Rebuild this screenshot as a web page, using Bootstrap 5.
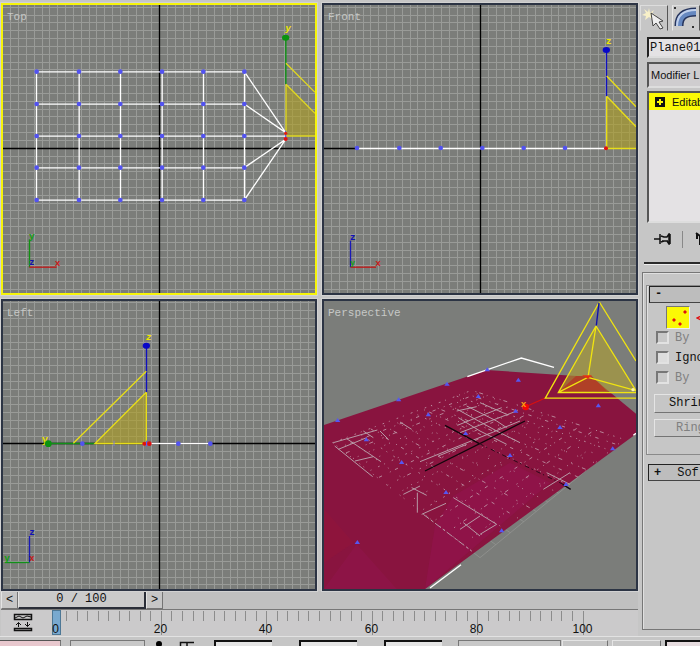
<!DOCTYPE html>
<html lang="en">
<head>
<meta charset="utf-8">
<meta name="viewport" content="width=device-width, initial-scale=1">
<title>3D editor</title>
<link href="https://cdn.jsdelivr.net/npm/bootstrap@5.3.0/dist/css/bootstrap.min.css" rel="stylesheet">
<style>
:root { --face:#c6c6c6; --dark:#747474; --light:#e4e4e4; --ink:#111; }
body { background:var(--face); color:var(--ink); font:12px/16px "Liberation Mono", monospace; overflow:hidden; }
button, input, select { font:inherit; color:inherit; border-radius:0; }
.workspace { padding:3px 2px 0 1px; }
.views { display:grid; grid-template-columns:1fr 1fr; gap:4px 5px; }
.view { position:relative; border:2px solid #2c3444; background:#7b7d7a; outline:1px solid #d2d2d2; }
.view.active { border-color:#f6f40a; }
.view svg { display:block; width:100%; height:auto; }
.view-label { position:absolute; left:4px; top:4px; font-size:11px; line-height:16px; color:#c6c8c6; z-index:1; }
svg text { font-family:"Liberation Mono", monospace; font-weight:bold; }
.raised { background:var(--face); border:1px solid; border-color:var(--light) var(--dark) var(--dark) var(--light); padding:0; }
.slider-row { height:18px; background:#c0c0c0; }
.slider-row .step { width:17px; line-height:14px; }
.slider-row .thumb { width:128px; border-right:2px solid #2a2e38; border-bottom:2px solid #2a2e38; line-height:15px; background:#cacaca; }
.track { height:27px; border-top:1px solid #777; background:#cbcacb; }
.track svg { display:block; width:100%; height:auto; overflow:visible; }
.track text { font:12px "Liberation Sans", sans-serif; }
.side { flex:0 0 60px; overflow:hidden; padding-top:5px; }
.side-body { width:120px; }
.tab-btn { width:28px; height:26px; border-color:#ddd #555 var(--face) #ddd; }
.tab-btn.open { border-left-color:#e8e8e8; background:#cbcbcb; }
.sunk { border:2px solid; border-color:#555 #ddd #ddd #555; background:#e4e2e4; }
.name-box { height:21px; width:110px; padding:0 1px; margin:6px 0 4px 7px; border-color:#222 #ddd #ddd #222; }
.mod-list { height:26px; width:110px; margin-left:7px; padding:0 0 0 2px; font:11px "Liberation Sans", sans-serif; background:#cfcdcf; appearance:none; }
.stack { height:132px; width:110px; margin:3px 0 0 7px; }
.stack button { height:17px; padding:0 0 0 6px; gap:7px; background:#fbf905; border:0; font:11px "Liberation Sans", sans-serif; width:100%; }
.tools { height:32px; gap:11px; padding-left:14px; }
.tool-sep { width:1px; height:17px; background:#888; }
.rule { height:3px; background:#2a2a2a; margin:7px 0 7px 4px; border-bottom:1px solid #eee; }
.roll { border:1px solid #777; margin-left:2px; height:358px; box-shadow:inset 1px 1px #e0e0e0; padding:4px 0 0 3px; }
.group { border:1px solid #8a8a8a; height:170px; margin-top:8px; box-shadow:inset 1px 1px #e0e0e0; }
.roll-head { height:17px; background:#bdbdbd; border:1px solid #222; border-right-color:#444; border-bottom-color:#444; padding:0 0 0 5px; text-align:left; line-height:14px; width:110px; font-weight:bold; }
.roll-head.first { margin:-9px 0 0 2px; position:relative; }
.roll-head b { font-weight:normal; padding-left:16px; }
.sub { height:24px; padding:3px 0 0 19px; gap:6px; }
.vertex { width:24px; height:23px; background:#fbf905; border:1px solid; border-color:#777 #eee #eee #777; padding:0; }
.edge { background:none; border:0; padding:0; }
.opts { padding-top:1px; }
.opts label { height:20px; gap:6px; padding-left:9px; color:var(--ink); line-height:20px; }
.opts .off { color:#808080; }
.opts input { appearance:none; width:13px; height:13px; margin:0; border:2px solid; border-color:#777 #e2e2e2 #e2e2e2 #777; background:#ddd; }
.opts .off input { background:#c8c8c8; }
.wide { display:block; width:110px; height:19px; margin:6px 0 0 7px; padding-left:14px; text-align:left; line-height:16px; }
.wide:disabled { color:#808080; padding-left:21px; height:18px; }
.second { margin:9px 0 0 2px; }
.status { height:10px; border-top:1px solid #e2e2e2; overflow:hidden; }
.status > * { height:20px; margin-top:3px; flex-shrink:0; }
.cell { border:1px solid #777; background:#c8c8c8; padding:0; }
.spin { border:0; border-top:2px solid #111; border-left:2px solid #111; background:#e4e4e4; padding:0; min-width:0; }
.listener { background:#e8c8ce; border:0; border-top:1px solid #555; padding:0; }
#listener { width:61px; border-right:1px solid #777; }
#selection { width:75px; margin-left:9px; }
#lock { width:40px; margin-left:9px; }
.status .spin { width:58px; margin-left:27px; }
#lock + .spin { margin-left:20px; }
#gridsize { width:103px; margin-left:16px; }
#autokey { width:46px; margin-left:1px; }
#setkey { width:49px; margin-left:4px; }
.status #frame { width:37px; margin-left:4px; background:#e6dcdf; }
</style>
<script defer src="https://cdn.jsdelivr.net/npm/bootstrap@5.3.0/dist/js/bootstrap.bundle.min.js"></script>
</head>
<body class="d-flex flex-column min-vh-100">
<div class="d-flex">
  <main class="workspace flex-grow-1">
    <div class="views">
      <section class="view active" aria-label="Top view">
        <span class="view-label">Top</span>
        <svg viewBox="9 15 936 864">
          <g class="grid" data-cx="478.5" data-cy="444.5"></g>
          <path d="M478.5 15V879M9 445.5H945" stroke="#000" stroke-width="4"/>
          <path d="M858 253L945 340V408H858z" fill="#b0a020" fill-opacity=".6"/>
          <g fill="none" stroke="#fff" stroke-width="4">
            <path d="M110 215.5H733M110 312.5H733M110 408.5H857M110 503.5H733M110 600.5H733M109.500 215V600M237.500 215V600M361.500 215V600M486.500 215V600M610.500 215V600M733.500 215V600M733 215L857 398M733 312L857 398M733 503L857 418M733 600L857 418"/>
          </g>
          <path d="M857.500 113V253" stroke="#0a9310" stroke-width="4"/>
          <path d="M858 190L945 277M858 253L945 340M858 253V408H945" fill="none" stroke="#e0d820" stroke-width="4"/>
          <ellipse cx="857" cy="113" rx="11" ry="9" fill="#0a9310"/>
          <text x="856" y="94" font-size="28" font-style="italic" fill="#f0e800">y</text>
          <g class="dots" data-grid="110,237,361,486,610,733;215,312,408,503,600"></g>
          <path d="M857 392V420" stroke="#5a5af8" stroke-width="4"/>
          <circle cx="857" cy="400" r="5" fill="#e02010"/><circle cx="857" cy="417" r="6" fill="#e01010"/>
          <path d="M88.500 718V802" stroke="#109010" stroke-width="4"/><path d="M88 801.500H170" stroke="#c01818" stroke-width="4"/>
          <text x="87" y="717" font-size="28" fill="#10a010">y</text><text x="88" y="796" font-size="26" fill="#1010b0">z</text><text x="164" y="797" font-size="28" fill="#c81818">x</text>
        </svg>
      </section>
      <section class="view" aria-label="Front view">
        <span class="view-label">Front</span>
        <svg viewBox="12 15 936 864">
          <g class="grid" data-cx="481.5" data-cy="444.5"></g>
          <path d="M481.500 15V879M12 445.500H110" stroke="#000" stroke-width="4"/>
          <path d="M860 289L948 378V445H860z" fill="#b0a020" fill-opacity=".6"/>
          <path d="M110 445.500H858" stroke="#fff" stroke-width="4"/>
          <path d="M859.500 150V289" stroke="#1010c0" stroke-width="4"/>
          <path d="M860 228L948 320M860 289L948 380M860 289V445.500H948" fill="none" stroke="#e8de18" stroke-width="4"/>
          <ellipse cx="859" cy="150" rx="11" ry="9" fill="#0808c8"/>
          <text x="858" y="133" font-size="28" fill="#f0e800">z</text>
          <g class="dots" data-grid="111,238,362,487,611,735;444"></g>
          <circle cx="858" cy="445" r="6" fill="#e01010"/>
          <path d="M91.500 722V802" stroke="#1818b8" stroke-width="4"/><path d="M92 801.500H168" stroke="#c01818" stroke-width="4"/>
          <text x="90" y="719" font-size="28" fill="#1010b8">z</text><text x="91" y="795" font-size="24" fill="#10a010">y</text><text x="166" y="797" font-size="28" fill="#c81818">x</text>
        </svg>
      </section>
      <section class="view" aria-label="Left view">
        <span class="view-label">Left</span>
        <svg viewBox="9 15 936 864">
          <g class="grid" data-cx="478.5" data-cy="443.5"></g>
          <path d="M478.500 15V879M9 442.500H945" stroke="#000" stroke-width="4"/>
          <path d="M285 442L439 289V442z" fill="#b0a020" fill-opacity=".6"/>
          <path d="M440 442.500H630" stroke="#fff" stroke-width="4"/>
          <path d="M145 442.500H285" stroke="#109018" stroke-width="4"/>
          <path d="M439.500 150V289" stroke="#1010c0" stroke-width="4"/>
          <path d="M439 226L220 442M439 289L285 442.500H439V289" fill="none" stroke="#e8de18" stroke-width="4"/>
          <ellipse cx="439" cy="149" rx="11" ry="9" fill="#0808c8"/>
          <text x="126" y="440" font-size="30" fill="#e8e000">y</text><circle cx="145" cy="443" r="10" fill="#0a9310"/>
          <text x="438" y="132" font-size="28" font-style="italic" fill="#f0e800">z</text>
          <g class="dots" data-grid="247,535,631;443"></g>
          <path d="M342 434V450" stroke="#8080d0" stroke-width="3"/>
          <circle cx="433" cy="443" r="6" fill="#e01010"/><path d="M440 434V451" stroke="#5a5af8" stroke-width="4"/><circle cx="448" cy="443" r="7" fill="#e01010"/>
          <path d="M88.500 720V800" stroke="#1818b8" stroke-width="4"/><path d="M15 799.500H88" stroke="#109018" stroke-width="4"/>
          <text x="88" y="718" font-size="28" fill="#1010b8">z</text><text x="88" y="795" font-size="26" fill="#c81818">x</text><text x="13" y="794" font-size="28" fill="#10a010">y</text>
        </svg>
      </section>
      <section class="view" aria-label="Perspective view">
        <span class="view-label">Perspective</span>
        <svg viewBox="12 15 936 864">
          <defs><clipPath id="plane"><path d="M12 387L500 222L815 243L948 353V414L315 879H12z"/></clipPath></defs>
          <g id="ground" stroke="#979996" stroke-width="2" fill="none"></g>
          <path d="M12 387L500 222L815 243L948 353V414L315 879H12z" fill="#89143f"/>
          <path d="M570 500L690 560L315 879L345 690L400 600z" fill="#92134d" opacity=".7"/>
          <path d="M12 879L110 745L230 879z" fill="#92134d" opacity=".5"/>
          <path d="M12 640L100 740L12 800z" fill="#931439" opacity=".5"/>
          <g id="mesh" clip-path="url(#plane)" stroke="#c39bab" stroke-width="2.500" fill="none"></g>
          <g stroke="#b79aa6" stroke-width="3" fill="none">
            <path d="M40 440L172 402M80 428L183 497M44 450L158 542M55 460L140 425M105 495L160 482M130 405L160 425M240 378L275 400M180 405L205 430M410 345L470 332M412 388L545 335M420 410L590 345M300 497L520 408L600 375M355 480L440 445M440 330L530 375L560 395M412 340L530 405L600 440M415 365L480 405L560 445M480 320L560 355M275 575L320 598M250 595L300 570M292 590V650M305 655L378 622M400 605L530 685M430 680L480 720M480 715L530 685M420 700L480 660M670 580L750 530M680 530L750 565"/>
            <path d="M310 655L455 765" stroke-dasharray="22 7 9 6"/>
          </g>
          <path d="M315 525L615 375M375 388L478 443M728 565L752 580" stroke="#12060c" stroke-width="4"/>
          <path d="M478 443L740 570" stroke="#2c0818" stroke-width="3" stroke-dasharray="14 8 4 12"/>
          <path d="M442 242L604 186L702 214M330 876L423 806M940 418L948 412" fill="none" stroke="#fff" stroke-width="4"/>
          <g class="tris" fill="#5656f0" data-at="53,373 236,311 381,264 502,221 595,252 475,301 325,356 139,431 245,499 437,412 587,345 720,394 835,329 878,458 570,478 738,565 378,589 545,704 112,739"></g>
          <path d="M828 90L948 284L715 289z" fill="#b0a030" fill-opacity=".6"/>
          <path d="M715 289L768 240H815L862 286z" fill="#b33a24" fill-opacity=".85"/>
          <path d="M615 333L676 306" stroke="#d81010" stroke-width="4"/>
          <path d="M838 18L676 306.500H948M838 18L948 195M828 90L715 289.500H948M828 90L948 284M828 90L804 244L715 289M804 244L948 284" fill="none" stroke="#f0e410" stroke-width="4"/>
          <path d="M837 20L829 88" stroke="#1010a8" stroke-width="4"/>
          <path d="M786 238H816L804 248z" fill="#e83010"/><circle cx="939" cy="281" r="5" fill="#fff8b0"/>
          <circle cx="617" cy="333" r="10" fill="#f00808"/><text x="602" y="333" font-size="28" fill="#ffa010">x</text>
        </svg>
      </section>
    </div>
    <div class="slider-row d-flex">
      <button class="raised step" aria-label="Previous frame">&lt;</button>
      <button class="raised thumb">0 / 100</button>
      <button class="raised step" aria-label="Next frame">&gt;</button>
    </div>
    <div class="track">
      <svg viewBox="1 611 637 26" aria-label="Time track">
        <rect x="52.500" y="611.500" width="8" height="24" fill="#79a9cf" stroke="#4d7795"/>
        <g fill="none" stroke="#111"><path d="M14.500 615.500H31.500V620.500H14.500zM14.500 629.500H31.500V631.500H14.500z" stroke-width="1.500"/><path d="M15 619l4-2 4 2 4-2 4 1M18.500 628V623.500M16 626l2.500-2.500L21 626M27.500 623V627.500M25 625l2.500 2.500L30 625"/></g>
        <g id="ticks" text-anchor="middle" fill="#111"></g>
      </svg>
    </div>
  </main>
  <aside class="side">
    <div class="side-body">
      <div class="d-flex gap-1">
        <button class="raised tab-btn" aria-label="Create"><svg width="26" height="24" viewBox="0 0 26 24"><path d="M8 2l1 5 4-3-2 4 5 1-5 1 1 4-4-3-4 3 1-4-4-1 4-2-2-4 4 3z" fill="#f8f0c8"/><path d="M10 7l12 8-4 1 4 6-3 1-4-6-3 3z" fill="#eee" stroke="#444"/></svg></button>
        <button class="raised tab-btn open" aria-label="Modify"><svg width="26" height="24" viewBox="0 0 26 24" fill="none"><path d="M6 20C6 10 12 6 23 6" stroke="#26345c" stroke-width="9"/><path d="M6 20C6 10 12 6 23 6" stroke="#6688c0" stroke-width="6"/><path d="M4 20C4 8 12 4 23 4" stroke="#c0d0ec" stroke-width="2"/><path d="M1 2h2M19 21h2" stroke="#333" stroke-width="2"/></svg></button>
      </div>
      <input class="sunk name-box d-block" aria-label="Object name" value="Plane01">
      <select class="sunk mod-list d-block" aria-label="Modifier list"><option>Modifier L</option></select>
      <div class="sunk stack"><button class="d-flex align-items-center"><svg class="flex-shrink-0" width="10" height="10" viewBox="0 0 10 10"><path d="M0 0h10v10H0z" fill="#111"/><path d="M2 5h6M5 2v6" stroke="#fbf905" stroke-width="2"/></svg>Editab</button></div>
      <div class="tools d-flex align-items-center">
        <button class="edge" aria-label="Pin stack"><svg class="d-block" width="17" height="12" viewBox="0 0 17 12"><path d="M0 6h6M6 1v10M7 3l3 1h3l2-3v10l-2-3h-3l-3 1M8 8h6M16 1v10" fill="none" stroke="#111" stroke-width="1.500"/></svg></button>
        <span class="tool-sep"></span>
        <button class="edge" aria-label="Show end result"><svg class="d-block" width="14" height="16" viewBox="0 0 14 16"><path d="M2 2l4 3v9M3 3v5" fill="none" stroke="#111" stroke-width="2"/></svg></button>
      </div>
      <div class="rule"></div>
      <div class="roll">
        <div class="group">
          <button class="roll-head first">-</button>
          <div class="sub d-flex align-items-start">
            <button class="vertex" aria-label="Vertex"><svg class="d-block" width="22" height="21" viewBox="0 0 22 21" fill="#e01010"><path d="M18 3l2 2-2 2-2-2zM7 11l2 2-2 2-2-2zM13 15l2 2-2 2-2-2z"/></svg></button>
            <button class="edge" aria-label="Edge"><svg class="d-block" width="14" height="24" viewBox="0 0 14 24"><path d="M9 8L1 12l8 4" fill="none" stroke="#e01010" stroke-width="1.500"/></svg></button>
          </div>
          <div class="opts">
            <label class="d-flex align-items-center off"><input type="checkbox" disabled>By</label>
            <label class="d-flex align-items-center"><input type="checkbox">Igno</label>
            <label class="d-flex align-items-center off"><input type="checkbox" disabled>By</label>
          </div>
          <button class="raised wide">Shrin</button>
          <button class="raised wide" disabled>Ring</button>
        </div>
        <button class="roll-head second">+<b>Sof</b></button>
      </div>
    </div>
  </aside>
</div>
<footer class="status d-flex">
  <input class="listener" aria-label="Listener" id="listener">
  <span class="cell" id="selection"></span>
  <button class="edge" id="lock" aria-label="Lock selection"><svg class="d-block" width="40" height="20" viewBox="0 0 40 20"><circle cx="5" cy="4" r="3"/><path d="M26.500 20V2.500H40M33 2v18" fill="none" stroke="#111" stroke-width="1.500"/></svg></button>
  <input class="spin" aria-label="X"><input class="spin" aria-label="Y"><input class="spin" aria-label="Z">
  <span class="cell" id="gridsize"></span>
  <button class="raised" id="autokey" aria-label="Auto key"></button>
  <button class="raised" id="setkey" aria-label="Set key"></button>
  <input class="spin flex-grow-1" id="frame" aria-label="Frame">
</footer>
<script>
const NS = 'http://www.w3.org/2000/svg';
function add(parent, tag, attrs, text) {
  const e = document.createElementNS(NS, tag);
  for (const k in attrs) e.setAttribute(k, attrs[k]);
  if (text !== undefined) e.textContent = text;
  parent.appendChild(e);
}
// Construction grid of the flat views
document.querySelectorAll('.grid').forEach(g => {
  const cx = +g.dataset.cx, cy = +g.dataset.cy, step = 23.5;
  const snap = v => Math.floor(v / 3) * 3 + 1.5;
  let d = '';
  for (let i = -20; i <= 20; i++) {
    d += `M${snap(cx + i * step)} 15V879M9 ${snap(cy + i * step)}H948`;
  }
  add(g, 'path', { d, stroke: '#999b98', 'stroke-width': 3 });
});
// Vertices
document.querySelectorAll('.dots').forEach(g => {
  const [xs, ys] = g.dataset.grid.split(';').map(s => s.split(','));
  xs.forEach(x => ys.forEach(y => add(g, 'circle', { cx: x, cy: y, r: 7, fill: '#5252f0' })));
});
document.querySelectorAll('.tris').forEach(g => g.dataset.at.split(' ').forEach(p => {
  const [x, y] = p.split(',').map(Number);
  add(g, 'path', { d: `M${x - 8} ${y + 5}L${x} ${y - 7}L${x + 8} ${y + 5}z` });
}));
// Ground plane of the perspective view: a unit square mapped to four corners
const [A, B, C, D] = [[38, 440], [480, 785], [912, 430], [455, 283]];
const sx = A[0] - B[0] + C[0] - D[0], sy = A[1] - B[1] + C[1] - D[1];
const dx1 = B[0] - C[0], dx2 = D[0] - C[0], dy1 = B[1] - C[1], dy2 = D[1] - C[1];
const den = dx1 * dy2 - dx2 * dy1;
const gg = (sx * dy2 - dx2 * sy) / den, hh = (dx1 * sy - sx * dy1) / den;
function map(u, v) {
  const w = gg * u + hh * v + 1;
  return [((B[0] - A[0] + gg * B[0]) * u + (D[0] - A[0] + hh * D[0]) * v + A[0]) / w,
          ((B[1] - A[1] + gg * B[1]) * u + (D[1] - A[1] + hh * D[1]) * v + A[1]) / w];
}
const dashes = ['3 22 5 15', '3 12 3 33', '10 26 3 14', '3 40', '4 18 3 9 12 30'];
for (let i = 0; i <= 14; i++) {
  const t = i / 14;
  [[map(t, 0), map(t, 1)], [map(0, t), map(1, t)]].forEach((l, k) => {
    const d = `M${l[0]}L${l[1]}`;
    add(document.getElementById('ground'), 'path', { d });
    add(document.getElementById('mesh'), 'path', { d, 'stroke-dasharray': dashes[(i * 2 + k) % 5], 'stroke-dashoffset': i * 17 });
  });
}
// Time ticks, one for every second frame
const ticks = document.getElementById('ticks');
for (let f = 0; f <= 100; f += 2) {
  const x = Math.floor(56 + f * 5.27) + .5;
  if (f) add(ticks, 'path', { d: `M${x} 612V${f % 20 ? 622 : 636}`, stroke: '#8c8c8c' });
  if (f % 20 === 0) add(ticks, 'text', { x: x - 1, y: 634 }, f);
}
</script>
</body>
</html>
